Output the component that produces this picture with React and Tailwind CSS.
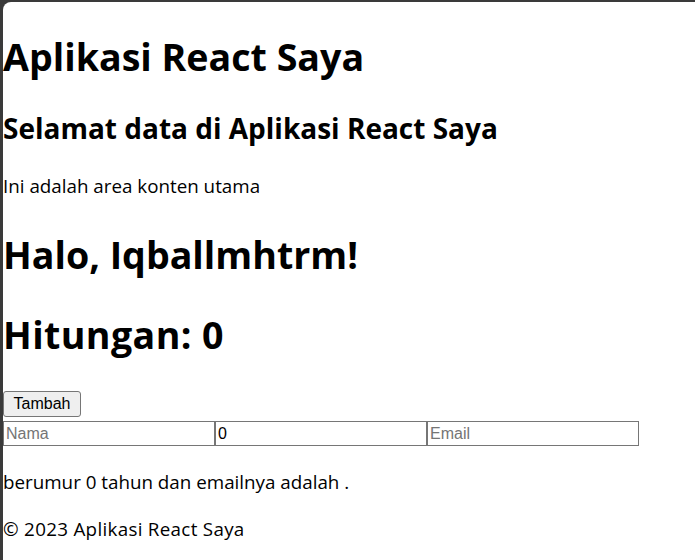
export default function App() {
  return (
    <div className="w-[695px] h-[560px] bg-[#3a3a3a] overflow-hidden">
      <div className="mt-[2px] ml-[3px] h-[558px] bg-white rounded-tl-[8px] text-black font-['Open_Sans',sans-serif]">
        <div className="pt-[31px]">
          <h1 className="text-[37.6px] leading-[48px] font-bold m-0">Aplikasi React Saya</h1>
          <h2 className="mt-[29px] text-[28px] leading-[36px] font-bold">Selamat data di Aplikasi React Saya</h2>
          <p className="mt-[27px] text-[18.8px] leading-[26px]">Ini adalah area konten utama</p>
          <h1 className="mt-[32px] text-[37.6px] leading-[48px] font-bold">Halo, Iqballmhtrm!</h1>
          <h1 className="mt-[32px] text-[37.6px] leading-[48px] font-bold tracking-[0.4px]">Hitungan: 0</h1>
          <button className="mt-[32px] block w-[78px] h-[26px] bg-[#efefef] border border-[#767676] rounded-[3px] text-[16px] leading-[18px] font-['Liberation_Sans',Arial,sans-serif] text-black">
            Tambah
          </button>
          <div className="mt-[4px] flex">
            <input
              type="text"
              placeholder="Nama"
              className="w-[212px] h-[25px] border border-[#767676] px-[2px] text-[16px] font-['Liberation_Sans',Arial,sans-serif] text-black placeholder:text-[#757575] outline-none"
            />
            <input
              type="text"
              defaultValue="0"
              className="w-[212px] h-[25px] border border-[#767676] px-[2px] text-[16px] font-['Liberation_Sans',Arial,sans-serif] text-black outline-none"
            />
            <input
              type="text"
              placeholder="Email"
              className="w-[212px] h-[25px] border border-[#767676] px-[2px] text-[16px] font-['Liberation_Sans',Arial,sans-serif] text-black placeholder:text-[#757575] outline-none"
            />
          </div>
          <p className="mt-[23px] text-[18.8px] leading-[26px]">berumur 0 tahun dan emailnya adalah .</p>
          <p className="mt-[21px] text-[18.8px] leading-[26px] tracking-[0.3px]">© 2023 Aplikasi React Saya</p>
        </div>
      </div>
    </div>
  );
}
